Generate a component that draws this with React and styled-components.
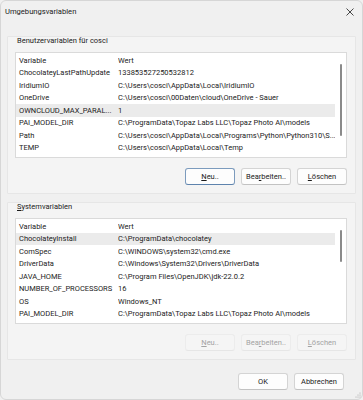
import React from 'react'
import styled, { createGlobalStyle } from 'styled-components'

const GlobalStyle = createGlobalStyle`
    html, body {
        margin: 0;
        padding: 0;
        background: #f0f0f0;
    }
    * {
        box-sizing: border-box;
    }
`

const userVars = [
    ['ChocolateyLastPathUpdate', '133853527250532812'],
    ['IridiumIO', 'C:\\Users\\cosci\\AppData\\Local\\IridiumIO'],
    ['OneDrive', 'C:\\Users\\cosci\\00Daten\\cloud\\OneDrive - Sauer'],
    ['OWNCLOUD_MAX_PARAL...', '1'],
    ['PAI_MODEL_DIR', 'C:\\ProgramData\\Topaz Labs LLC\\Topaz Photo AI\\models'],
    ['Path', 'C:\\Users\\cosci\\AppData\\Local\\Programs\\Python\\Python310\\S...'],
    ['TEMP', 'C:\\Users\\cosci\\AppData\\Local\\Temp'],
    ['TMP', 'C:\\Users\\cosci\\AppData\\Local\\Temp']
]

const systemVars = [
    ['ChocolateyInstall', 'C:\\ProgramData\\chocolatey'],
    ['ComSpec', 'C:\\WINDOWS\\system32\\cmd.exe'],
    ['DriverData', 'C:\\Windows\\System32\\Drivers\\DriverData'],
    ['JAVA_HOME', 'C:\\Program Files\\OpenJDK\\jdk-22.0.2'],
    ['NUMBER_OF_PROCESSORS', '16'],
    ['OS', 'Windows_NT'],
    ['PAI_MODEL_DIR', 'C:\\ProgramData\\Topaz Labs LLC\\Topaz Photo AI\\models'],
    ['Path', 'C:\\Program Files\\Common Files\\Oracle\\Java\\javapath;C:\\P...']
]

export default function App() {
    return (
        <>
            <GlobalStyle />
            <Window>
                <TitleBar>
                    <Title>Umgebungsvariablen</Title>
                    <CloseButton>
                        <svg width="8" height="8" viewBox="0 0 8 8">
                            <path
                                d="M0.5 0.5 L7.5 7.5 M7.5 0.5 L0.5 7.5"
                                stroke="#333"
                                strokeWidth="0.9"
                            />
                        </svg>
                    </CloseButton>
                </TitleBar>
                <Body>
                    <VarGroup
                        label="Benutzervariablen für cosci"
                        rows={userVars}
                        selected={3}
                        thumb={72}
                        disabled={false}
                    />
                    <VarGroup
                        label={
                            <>
                                <u>S</u>ystemvariablen
                            </>
                        }
                        rows={systemVars}
                        selected={0}
                        thumb={32}
                        disabled={true}
                    />
                    <Footer>
                        <Button>OK</Button>
                        <Button>Abbrechen</Button>
                    </Footer>
                </Body>
                <Grip>
                    <svg width="6" height="6" viewBox="0 0 6 6">
                        <circle cx="5" cy="1" r="0.5" fill="#999" />
                        <circle cx="3" cy="3" r="0.5" fill="#999" />
                        <circle cx="5" cy="3" r="0.5" fill="#999" />
                        <circle cx="1" cy="5" r="0.5" fill="#999" />
                        <circle cx="3" cy="5" r="0.5" fill="#999" />
                        <circle cx="5" cy="5" r="0.5" fill="#999" />
                    </svg>
                </Grip>
            </Window>
        </>
    )
}

function VarGroup({ label, rows, selected, thumb, disabled }) {
    return (
        <Group>
            <GroupLabel>{label}</GroupLabel>
            <ListBox>
                <Rows>
                    <Row header>
                        <NameCell>Variable</NameCell>
                        <ValueCell>Wert</ValueCell>
                    </Row>
                    {rows.map(([name, value], i) => (
                        <Row key={name + i} selected={i === selected}>
                            <NameCell>{name}</NameCell>
                            <ValueCell>{value}</ValueCell>
                        </Row>
                    ))}
                </Rows>
                <Track>
                    <Thumb style={{ height: thumb }} />
                </Track>
            </ListBox>
            <ButtonRow>
                <Button disabled={disabled} focused={!disabled}>
                    <u>N</u>eu..
                </Button>
                <Button disabled={disabled}>
                    Bea<u>r</u>beiten..
                </Button>
                <Button disabled={disabled}>
                    <u>L</u>öschen
                </Button>
            </ButtonRow>
        </Group>
    )
}

const font = `Roboto, 'Liberation Sans', Arial, sans-serif`

const Window = styled.div`
    position: relative;
    width: 363px;
    height: 400px;
    background: #f0f0f0;
    border: 1px solid #d6d6d6;
    border-radius: 6px;
    overflow: hidden;
    font-family: ${font};
    font-size: 7.5px;
    color: #1b1b1b;
`

const TitleBar = styled.div`
    height: 21px;
    display: flex;
    align-items: center;
    justify-content: space-between;
    padding: 0 6px 0 4px;
`

const Title = styled.div`
    font-size: 7.6px;
    color: #1b1b1b;
`

const CloseButton = styled.div`
    width: 12px;
    height: 12px;
    display: flex;
    align-items: center;
    justify-content: center;
`

const Body = styled.div`
    padding: 14px 6px 0 6px;
    display: flex;
    flex-direction: column;
`

const Group = styled.div`
    background: #f4f4f4;
    border: 1px solid #e6e6e6;
    border-radius: 1px;
    padding: 0 8px 8px 7px;
    display: flex;
    flex-direction: column;
    & + & {
        margin-top: 8px;
    }
`

const GroupLabel = styled.div`
    height: 15px;
    line-height: 8px;
    padding-top: 0;
    padding-left: 2px;
`

const ListBox = styled.div`
    height: 106px;
    background: #ffffff;
    border: 1px solid #dadada;
    display: flex;
    overflow: hidden;
`

const Rows = styled.div`
    flex: 1;
    min-width: 0;
    display: flex;
    flex-direction: column;
    padding-top: 1px;
`

const Row = styled.div`
    flex: none;
    height: 12.5px;
    display: flex;
    align-items: center;
    background: ${props => (props.selected ? '#ebebeb' : 'transparent')};
    white-space: nowrap;
`

const NameCell = styled.div`
    width: 102px;
    flex: none;
    padding-left: 3px;
    overflow: hidden;
`

const ValueCell = styled.div`
    flex: 1;
    overflow: hidden;
`

const Track = styled.div`
    width: 11px;
    flex: none;
    display: flex;
    justify-content: center;
    padding-top: 11px;
`

const Thumb = styled.div`
    width: 2px;
    border-radius: 1px;
    background: #8a8a8a;
`

const ButtonRow = styled.div`
    display: flex;
    justify-content: flex-end;
    gap: 6px;
    margin-top: 10px;
`

const Button = styled.div`
    width: 50px;
    height: 17px;
    display: flex;
    align-items: center;
    justify-content: center;
    border-radius: 3px;
    background: ${props => (props.disabled ? '#f5f5f5' : '#fdfdfd')};
    border: 1px solid
        ${props =>
            props.disabled ? '#ececec' : props.focused ? '#7c9bbd' : '#d4d4d4'};
    border-bottom-color: ${props =>
        props.disabled ? '#e6e6e6' : props.focused ? '#5e83ad' : '#c2c2c2'};
    color: ${props => (props.disabled ? '#a3a3a3' : '#1b1b1b')};
    white-space: nowrap;
`

const Footer = styled.div`
    display: flex;
    justify-content: flex-end;
    gap: 6px;
    margin-top: 13px;
    padding-right: 12px;
`

const Grip = styled.div`
    position: absolute;
    right: 1px;
    bottom: 1px;
    width: 6px;
    height: 6px;
    display: flex;
`
